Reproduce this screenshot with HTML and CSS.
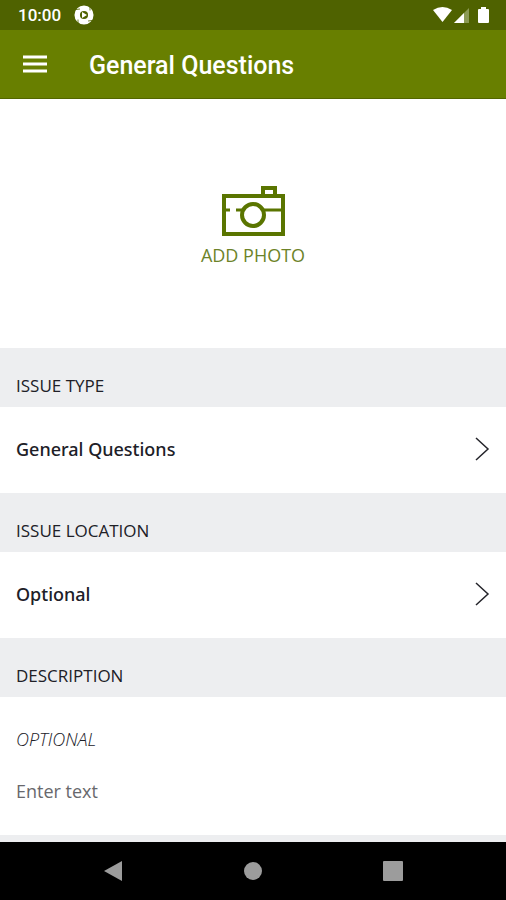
FILE: index.html
```html
<!DOCTYPE html>
<html lang="en">
<head>
<meta charset="utf-8">
<meta name="viewport" content="width=device-width, initial-scale=1">
<title>General Questions</title>
<link rel="stylesheet" href="styles.css">
</head>
<body>
<div class="status">
  <span class="clock">10:00</span>
  <svg class="app-dot" width="20" height="20" viewBox="0 0 20 20" aria-hidden="true">
    <circle cx="10" cy="10" r="6.800" fill="none" stroke="#fff" stroke-width="5.500"/>
    <path d="M8 7v6l5-3z" fill="#fff"/>
    <path d="M2 4.500l4-.5M16 1.500l0 4M18 15.500l-4 .5M4 18.500l0-4" stroke="#4f6200" stroke-width=".8"/>
  </svg>
  <svg class="signals" width="60" height="20" viewBox="0 0 60 20" aria-hidden="true">
    <path d="M1 5Q10.500-.8 20 5L10.500 17z" fill="#fff"/>
    <path d="M37 3v15H22z" fill="#8b9a55"/>
    <path d="M32 8v10H22z" fill="#fff"/>
    <path d="M49 2h5v2h2q1 0 1 1v12q0 1-1 1h-9q-1 0-1-1V5q0-1 1-1h2z" fill="#fff"/>
  </svg>
</div>
<header class="appbar">
  <button class="menu" type="button" aria-label="Menu">
    <svg width="24" height="18" viewBox="0 0 24 18"><path d="M0 2h24M0 9h24M0 16h24" stroke="#fff" stroke-width="3"/></svg>
  </button>
  <h1>General Questions</h1>
</header>
<main>
  <button class="photo" type="button">
    <svg width="64" height="52" viewBox="0 0 64 52" fill="none" stroke="#5a7500" stroke-width="4" aria-hidden="true">
      <path d="M3 11h59v38H3zM42 11V3h12v8"/>
      <circle cx="32" cy="30" r="11"/>
      <path d="M3 25h6M15 25h7M43 25h18" stroke-width="3"/>
    </svg>
    <span>ADD PHOTO</span>
  </button>
  <h2>ISSUE TYPE</h2>
  <button class="row" type="button">
    <span>General Questions</span>
    <svg width="16" height="26" viewBox="0 0 16 26" aria-hidden="true"><path d="M2 2l12 11L2 24" fill="none" stroke="#24242a" stroke-width="1.500"/></svg>
  </button>
  <h2>ISSUE LOCATION</h2>
  <button class="row" type="button">
    <span>Optional</span>
    <svg width="16" height="26" viewBox="0 0 16 26" aria-hidden="true"><path d="M2 2l12 11L2 24" fill="none" stroke="#24242a" stroke-width="1.500"/></svg>
  </button>
  <h2>DESCRIPTION</h2>
  <div class="field">
    <label for="description">OPTIONAL</label>
    <input id="description" type="text" placeholder="Enter text">
  </div>
</main>
<nav class="navbar">
  <button type="button" aria-label="Back"><svg width="20" height="22" viewBox="0 0 20 22"><path d="M1 11L19 1v20z" fill="#9c9c9c"/></svg></button>
  <button type="button" aria-label="Home"><svg width="20" height="20" viewBox="0 0 20 20"><circle cx="10" cy="10" r="9" fill="#9c9c9c"/></svg></button>
  <button type="button" aria-label="Recent apps"><svg width="20" height="20" viewBox="0 0 20 20"><rect width="20" height="20" rx="1" fill="#9c9c9c"/></svg></button>
</nav>
</body>
</html>
```
FILE: styles.css
```css
* {
  box-sizing: border-box;
}

body {
  margin: 0;
  min-height: 100vh;
  display: flex;
  flex-direction: column;
  background: #fff;
  color: #202027;
  font-family: "Open Sans", sans-serif;
}

button {
  margin: 0;
  padding: 0;
  border: 0;
  background: none;
  color: inherit;
  font: inherit;
}

svg {
  display: block;
}

.status {
  display: flex;
  align-items: center;
  gap: 13px;
  height: 30px;
  padding: 0 14px 0 18px;
  background: #4f6200;
  color: #fff;
  font: 500 17px/20px Roboto, sans-serif;
}

.signals {
  margin-left: auto;
}

.appbar {
  display: flex;
  align-items: center;
  gap: 42px;
  height: 69px;
  padding: 0 23px;
  border-bottom: 1px solid #536600;
  background: #687f00;
  color: #fff;
}

.appbar h1 {
  margin: 0;
  padding-top: 4px;
  font: 500 25px/32px Roboto, sans-serif;
}

main {
  flex: 1;
  display: flex;
  flex-direction: column;
  border-bottom: 7px solid #edeef0;
}

.photo {
  display: flex;
  flex-direction: column;
  align-items: center;
  padding: 86px 0 81px;
  color: #6d8329;
  font-size: 18px;
  line-height: 24px;
}

.photo span {
  margin-top: 6px;
}

h2 {
  margin: 0;
  padding: 26px 16px 9px;
  background: #edeef0;
  font-size: 17px;
  font-weight: 400;
  line-height: 24px;
}

.row {
  display: flex;
  align-items: center;
  justify-content: space-between;
  height: 86px;
  padding: 0 16px 2px;
  font-family: "Noto Sans", "Open Sans", sans-serif;
  font-size: 18px;
  font-weight: 500;
  line-height: 24px;
}

.field {
  display: flex;
  flex-direction: column;
  gap: 28px;
  padding: 30px 16px 0;
  font-size: 18px;
  line-height: 24px;
}

.field label {
  font-style: italic;
  font-weight: 300;
}

.field input {
  width: 100%;
  padding: 0;
  border: 0;
  outline: 0;
  background: none;
  color: inherit;
  font: inherit;
}

.field input::placeholder {
  color: #68686c;
  opacity: 1;
}

.navbar {
  display: flex;
  justify-content: center;
  align-items: center;
  gap: 120px;
  height: 58px;
  background: #000;
}
```
